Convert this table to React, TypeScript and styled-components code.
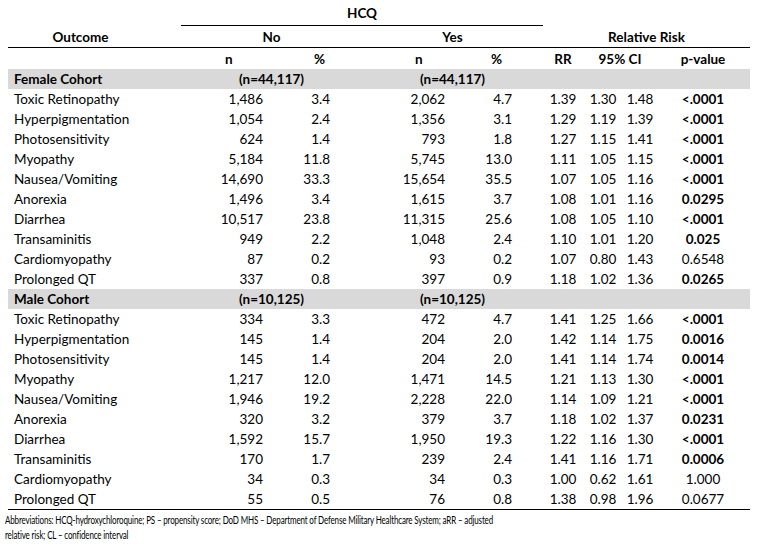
import React from "react";
import styled, { createGlobalStyle } from "styled-components";

const GlobalStyle = createGlobalStyle`
  html, body { margin: 0; padding: 0; background: #fff; }
  body { font-family: Lato, "Open Sans", sans-serif; color: #000; }
`;

type Row = [string, string, string, string, string, string, string, string, string, boolean];

const female: Row[] = [
  ["Toxic Retinopathy", "1,486", "3.4", "2,062", "4.7", "1.39", "1.30", "1.48", "<.0001", true],
  ["Hyperpigmentation", "1,054", "2.4", "1,356", "3.1", "1.29", "1.19", "1.39", "<.0001", true],
  ["Photosensitivity", "624", "1.4", "793", "1.8", "1.27", "1.15", "1.41", "<.0001", true],
  ["Myopathy", "5,184", "11.8", "5,745", "13.0", "1.11", "1.05", "1.15", "<.0001", true],
  ["Nausea/Vomiting", "14,690", "33.3", "15,654", "35.5", "1.07", "1.05", "1.16", "<.0001", true],
  ["Anorexia", "1,496", "3.4", "1,615", "3.7", "1.08", "1.01", "1.16", "0.0295", true],
  ["Diarrhea", "10,517", "23.8", "11,315", "25.6", "1.08", "1.05", "1.10", "<.0001", true],
  ["Transaminitis", "949", "2.2", "1,048", "2.4", "1.10", "1.01", "1.20", "0.025", true],
  ["Cardiomyopathy", "87", "0.2", "93", "0.2", "1.07", "0.80", "1.43", "0.6548", false],
  ["Prolonged QT", "337", "0.8", "397", "0.9", "1.18", "1.02", "1.36", "0.0265", true],
];

const male: Row[] = [
  ["Toxic Retinopathy", "334", "3.3", "472", "4.7", "1.41", "1.25", "1.66", "<.0001", true],
  ["Hyperpigmentation", "145", "1.4", "204", "2.0", "1.42", "1.14", "1.75", "0.0016", true],
  ["Photosensitivity", "145", "1.4", "204", "2.0", "1.41", "1.14", "1.74", "0.0014", true],
  ["Myopathy", "1,217", "12.0", "1,471", "14.5", "1.21", "1.13", "1.30", "<.0001", true],
  ["Nausea/Vomiting", "1,946", "19.2", "2,228", "22.0", "1.14", "1.09", "1.21", "<.0001", true],
  ["Anorexia", "320", "3.2", "379", "3.7", "1.18", "1.02", "1.37", "0.0231", true],
  ["Diarrhea", "1,592", "15.7", "1,950", "19.3", "1.22", "1.16", "1.30", "<.0001", true],
  ["Transaminitis", "170", "1.7", "239", "2.4", "1.41", "1.16", "1.71", "0.0006", true],
  ["Cardiomyopathy", "34", "0.3", "34", "0.3", "1.00", "0.62", "1.61", "1.000", false],
  ["Prolonged QT", "55", "0.5", "76", "0.8", "1.38", "0.98", "1.96", "0.0677", false],
];

type Align = "start" | "center" | "end";

// area name and alignment for each numeric column
const cols: { area: string; align: Align }[] = [
  { area: "non", align: "end" },
  { area: "nop", align: "end" },
  { area: "yesn", align: "end" },
  { area: "yesp", align: "end" },
  { area: "rr", align: "center" },
  { area: "lo", align: "center" },
  { area: "hi", align: "center" },
  { area: "pv", align: "center" },
];

const Page = styled.div`
  width: 757px;
  height: 551px;
  padding: 0 7px 0 8px;
  box-sizing: border-box;
  overflow: hidden;
`;

const GroupGrid = styled.div<{ $h: number; $line?: boolean }>`
  display: grid;
  grid-template-columns: 173px 181px 181px 207px;
  height: ${(p) => p.$h}px;
  border-bottom: ${(p) => (p.$line ? "1px solid #000" : "none")};
  align-items: center;
  font-size: 13.5px;
`;

const HcqCell = styled.div`
  grid-column: 2 / 4;
  align-self: stretch;
  display: flex;
  align-items: center;
  justify-content: center;
  border-bottom: 1px solid #000;
  font-weight: 700;
`;

const GroupCell = styled.div<{ $shift?: number }>`
  display: flex;
  justify-content: center;
  padding-right: ${(p) => p.$shift || 0}px;
  font-weight: 700;
  white-space: nowrap;
`;

const CohortBand = styled(GroupGrid)`
  background: #d9d9d9;
`;

const CohortLabel = styled.div`
  padding-left: 6px;
  font-weight: 700;
`;

const DataGrid = styled.div<{ $h?: number; $line?: boolean }>`
  display: grid;
  grid-template-columns: 173px 34px 48px 67px 67px 48px 67px 34px 34px 3px 40px 34px 16px 60px 17px;
  grid-template-areas: "label . non nop . yesn yesp . rr . lo hi . pv .";
  height: ${(p) => p.$h || 20}px;
  align-items: center;
  border-bottom: ${(p) => (p.$line ? "1px solid #000" : "none")};
  font-size: 13.5px;
`;

const Cell = styled.div<{ $area: string; $align?: Align; $bold?: boolean; $pl?: number; $pr?: number }>`
  grid-area: ${(p) => p.$area};
  display: flex;
  justify-content: ${(p) => (p.$align === "start" ? "flex-start" : p.$align === "end" ? "flex-end" : "center")};
  padding: 0 ${(p) => p.$pr || 0}px 0 ${(p) => p.$pl || 0}px;
  font-weight: ${(p) => (p.$bold ? 700 : 400)};
  white-space: nowrap;
`;

const Label = styled.div`
  grid-area: label;
  padding-left: 6px;
  white-space: nowrap;
`;

const Footer = styled.div`
  margin-left: -3px;
  padding-top: 3px;
  font-size: 10.5px;
  line-height: 15px;
  letter-spacing: -0.2px;
  transform: scaleX(0.763);
  transform-origin: left top;
  white-space: nowrap;
`;

function Cohort({ title, n }: { title: string; n: string }) {
  return (
    <CohortBand $h={20}>
      <CohortLabel>{title}</CohortLabel>
      <GroupCell>{n}</GroupCell>
      <GroupCell>{n}</GroupCell>
    </CohortBand>
  );
}

function Rows({ rows, lastLine }: { rows: Row[]; lastLine?: boolean }) {
  return (
    <>
      {rows.map((r, i) => (
        <DataGrid key={r[0]} $line={lastLine && i === rows.length - 1}>
          <Label>{r[0]}</Label>
          {cols.map((c, j) => (
            <Cell key={c.area} $area={c.area} $align={c.align} $bold={j === 7 && r[9]}>
              {r[j + 1]}
            </Cell>
          ))}
        </DataGrid>
      ))}
    </>
  );
}

export default function App() {
  return (
    <Page>
      <GlobalStyle />
      <GroupGrid $h={26}>
        <HcqCell>HCQ</HcqCell>
      </GroupGrid>
      <GroupGrid $h={21} $line>
        <GroupCell $shift={28}>Outcome</GroupCell>
        <GroupCell>No</GroupCell>
        <GroupCell>Yes</GroupCell>
        <GroupCell>Relative Risk</GroupCell>
      </GroupGrid>
      <DataGrid $h={21}>
        <Cell $area="non" $align="start" $pl={10} $bold>n</Cell>
        <Cell $area="nop" $align="end" $pr={5} $bold>%</Cell>
        <Cell $area="yesn" $align="start" $pl={18} $bold>n</Cell>
        <Cell $area="yesp" $align="end" $pr={10} $bold>%</Cell>
        <Cell $area="rr" $bold>RR</Cell>
        <Cell $area="lo / lo / hi / hi" $bold>95% CI</Cell>
        <Cell $area="pv" $bold>p-value</Cell>
      </DataGrid>
      <Cohort title="Female Cohort" n="(n=44,117)" />
      <Rows rows={female} />
      <Cohort title="Male Cohort" n="(n=10,125)" />
      <Rows rows={male} lastLine />
      <Footer>
        Abbreviations: HCQ-hydroxychloroquine; PS – propensity score; DoD MHS – Department of Defense Military Healthcare System; aRR – adjusted
        <br />
        relative risk; CL – confidence interval
      </Footer>
    </Page>
  );
}
